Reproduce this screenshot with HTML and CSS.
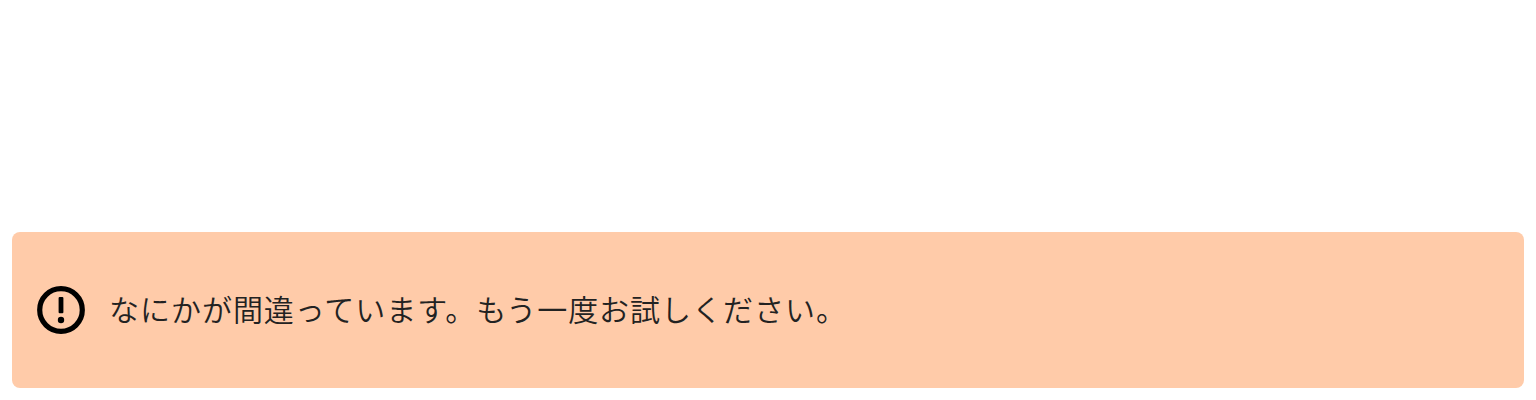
FILE: index.html
```html
<!DOCTYPE html>
<html lang="ja">
<head>
<meta charset="utf-8">
<title>エラー</title>
<link rel="stylesheet" href="styles.css">
</head>
<body>
<div class="alert" role="alert">
<svg class="alert-icon" viewBox="0 0 48 48" aria-hidden="true"><circle cx="24" cy="24" r="21.3" fill="none" stroke="#000" stroke-width="5.2"/><rect x="21.6" y="11" width="4.8" height="16.2" rx="1"/><circle cx="24" cy="34" r="3.2"/></svg>
<p class="alert-text">なにかが間違っています。もう一度お試しください。</p>
</div>
</body>
</html>
```

FILE: styles.css
```css
body {
  margin: 0;
  padding: 12px;
  height: 400px;
  box-sizing: border-box;
  display: flex;
  align-items: flex-end;
  background: #fff;
}
.alert {
  box-sizing: border-box;
  width: 100%;
  height: 156px;
  padding: 0 25px;
  display: flex;
  align-items: center;
  gap: 24px;
  background: #ffcba9;
  border-radius: 8px;
}
.alert-icon {
  width: 48px;
  height: 48px;
  flex: none;
}
.alert-text {
  margin: 0;
  padding-bottom: 4px;
  font: 350 30px/44px "Noto Sans CJK JP", sans-serif;
  letter-spacing: 0.97px;
  color: #222;
}
```
